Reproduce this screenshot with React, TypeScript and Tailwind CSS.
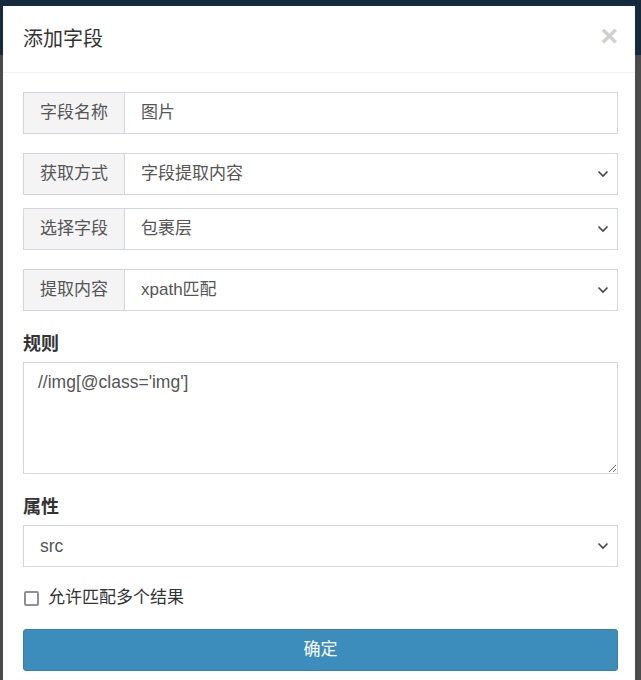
import React from 'react';

const font = { fontFamily: '"Liberation Sans", "Noto Sans CJK SC", sans-serif' };

function Chevron() {
  return (
    <svg width="12" height="8" viewBox="0 0 12 8" className="shrink-0">
      <path d="M1.5 1.5 L6 6 L10.5 1.5" fill="none" stroke="#444" strokeWidth="1.6" />
    </svg>
  );
}

function Group({ label, value, select }: { label: string; value: string; select?: boolean }) {
  return (
    <div className="flex h-[42px] border border-[#d2d6de] text-[17px] text-[#555]">
      <div className="w-[101px] shrink-0 bg-[#f4f4f4] border-r border-[#d2d6de] flex items-center justify-center">
        {label}
      </div>
      <div className="flex-1 flex items-center pl-[16px] pr-[8px]">
        <span className="flex-1">{value}</span>
        {select && <Chevron />}
      </div>
    </div>
  );
}

export default function App() {
  return (
    <div
      className="h-[680px] overflow-hidden bg-[linear-gradient(to_bottom,#152a3b_55px,#4b4b4b_55px)] pl-[3px] pt-[6px]"
      style={font}
    >
      <div className="w-[632px] h-[700px] bg-white">
        <div className="h-[67px] border-b border-[#f2f2f2] flex items-center justify-between pl-[20px] pr-[17px]">
          <h4 className="text-[20px] text-[#333]">添加字段</h4>
          <span className="text-[30px] font-bold text-[#cfcfcf] leading-none -mt-[6px]">×</span>
        </div>
        <div className="pl-[20px] pr-[17px] pt-[19px]">
          <Group label="字段名称" value="图片" />
          <div className="mt-[19px]">
            <Group label="获取方式" value="字段提取内容" select />
          </div>
          <div className="mt-[13px]">
            <Group label="选择字段" value="包裹层" select />
          </div>
          <div className="mt-[19px]">
            <Group label="提取内容" value="xpath匹配" select />
          </div>
          <div className="mt-[21px] mb-[6px] h-[24px] leading-[24px] text-[18px] font-bold text-[#333]">规则</div>
          <textarea
            defaultValue="//img[@class='img']"
            className="block w-full h-[112px] border border-[#d2d6de] px-[14px] py-[6px] text-[17.5px] text-[#555] outline-none"
            style={font}
          />
          <div className="mt-[21px] mb-[6px] h-[24px] leading-[24px] text-[18px] font-bold text-[#333]">属性</div>
          <div className="flex h-[42px] border border-[#d2d6de] items-center pl-[16px] pr-[8px] text-[17.5px] text-[#555]">
            <span className="flex-1">src</span>
            <Chevron />
          </div>
          <div className="mt-[19px] h-[24px] flex items-center gap-[9px] text-[17px] text-[#333]">
            <span className="ml-[1px] w-[15px] h-[15px] border-2 border-[#8f8f99] rounded-[2px] bg-white" />
            <span>允许匹配多个结果</span>
          </div>
          <button className="mt-[19px] w-full h-[42px] bg-[#3c8dbc] border border-[#367fa9] rounded-[3px] text-white text-[17px]">
            确定
          </button>
        </div>
      </div>
    </div>
  );
}
